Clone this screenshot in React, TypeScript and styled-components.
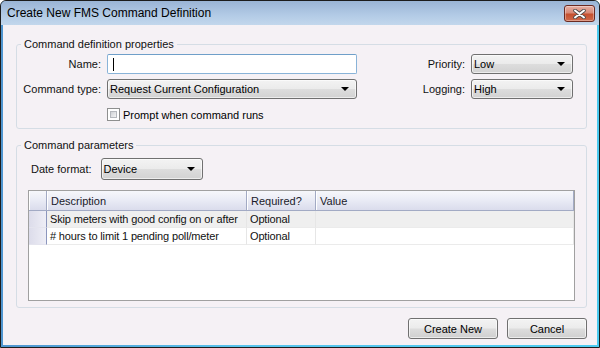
import styled, { createGlobalStyle } from 'styled-components';

const GlobalStyle = createGlobalStyle`
  html, body {
    margin: 0;
    padding: 0;
    background: #ffffff;
  }
  body {
    font-family: "Liberation Sans", Arial, sans-serif;
    font-size: 11px;
    color: #000;
  }
`;

const params = [
  { id: 1, description: 'Skip meters with good config on or after', required: 'Optional', value: '' },
  { id: 2, description: '# hours to limit 1 pending poll/meter', required: 'Optional', value: '' },
];

const Window = styled.div`
  width: 600px;
  height: 348px;
  box-sizing: border-box;
  display: flex;
  flex-direction: column;
  border: 1px solid #1c1c1c;
  border-radius: 6px 6px 0 0;
  overflow: hidden;
  background: linear-gradient(to right, #4f95cf, #58c4ec 40%, #4ccbf0);
`;

const TitleBar = styled.div`
  height: 24px;
  flex-shrink: 0;
  display: flex;
  align-items: flex-start;
  justify-content: space-between;
  padding: 0 4px 0 6px;
  background: linear-gradient(#9ab4d5, #b3cbe6 60%, #c2d7ec);
`;

const Title = styled.span`
  font-size: 12px;
  line-height: 24px;
  color: #000;
`;

const CloseButton = styled.button`
  width: 31px;
  height: 17px;
  margin-top: 4px;
  padding: 0;
  display: flex;
  align-items: center;
  justify-content: center;
  border: 1px solid #6b2a22;
  border-radius: 3px;
  background: linear-gradient(#e6b0a5, #d88a77 45%, #c5502f 55%, #cf6a4c);
  box-shadow: inset 0 0 0 1px rgba(255, 255, 255, 0.35);
`;

const Client = styled.div`
  flex: 1;
  margin: 0 2px 2px;
  padding: 12px 10px 0 13px;
  display: flex;
  flex-direction: column;
  background: #f5f1f5;
`;

const GroupBox = styled.fieldset<{ $top: number; $pad: string }>`
  margin: ${(p) => p.$top}px 0 0;
  padding: ${(p) => p.$pad};
  min-width: 0;
  border: 1px solid #d5dde5;
  border-radius: 3px;
`;

const GroupTitle = styled.legend`
  margin-left: 4px;
  padding: 0 3px;
  font-size: 11px;
  line-height: 14px;
  color: #101010;
`;

const PropGrid = styled.div`
  display: grid;
  grid-template-columns: 84px 250px 1fr auto 102px;
  grid-template-rows: 20px 20px auto;
  column-gap: 6px;
  row-gap: 5px;
  align-items: center;
`;

const ParamBody = styled.div`
  padding-left: 11px;
`;

const Spacer = styled.span``;

const FieldLabel = styled.label`
  text-align: right;
  white-space: nowrap;
  color: #111;
`;

const TextBox = styled.div`
  height: 20px;
  box-sizing: border-box;
  display: flex;
  align-items: center;
  padding-left: 5px;
  background: #fff;
  border: 1px solid #89b3d8;
  border-top-color: #6f9fc9;
  border-radius: 2px;
`;

const Caret = styled.span`
  width: 1px;
  height: 13px;
  background: #000;
`;

const Select = styled.div<{ $width?: number; $height: number }>`
  width: ${(p) => (p.$width ? `${p.$width}px` : 'auto')};
  height: ${(p) => p.$height}px;
  box-sizing: border-box;
  display: flex;
  align-items: center;
  justify-content: space-between;
  padding: 0 7px 0 2px;
  border: 1px solid #707070;
  border-radius: 3px;
  background: linear-gradient(#f3f3f3, #ebebeb 49%, #dddddd 51%, #d2d2d2);
  box-shadow: inset 0 0 0 1px rgba(255, 255, 255, 0.6);
  color: #000;
  white-space: nowrap;
`;

const Arrow = styled.span`
  width: 0;
  height: 0;
  border-left: 4px solid transparent;
  border-right: 4px solid transparent;
  border-top: 4px solid #000;
`;

const CheckRow = styled.div`
  display: flex;
  align-items: center;
  gap: 3px;
  padding-top: 4px;
`;

const CheckBox = styled.span`
  width: 13px;
  height: 13px;
  box-sizing: border-box;
  padding: 2px;
  border: 1px solid #8e8f8f;
  background: #fff;
  display: flex;
`;

const CheckInner = styled.span`
  flex: 1;
  border: 1px solid #b5b8bd;
  background: linear-gradient(135deg, #cfd1d5, #f4f4f5);
`;

const DateRow = styled.div`
  display: flex;
  align-items: center;
  gap: 9px;
  padding-left: 3px;
`;

const DataGrid = styled.div`
  margin-top: 10px;
  height: 111px;
  box-sizing: border-box;
  display: grid;
  grid-template-columns: 18px 200px 69px 1fr;
  grid-template-rows: 20px;
  grid-auto-rows: 17px;
  align-content: start;
  border: 1px solid #a0a0a0;
  background: #fff;
`;

const HeadCell = styled.div`
  display: flex;
  align-items: center;
  padding-left: 4px;
  white-space: nowrap;
  background: linear-gradient(#f6f7fb, #e9ebf5 50%, #dadcec);
  border-right: 1px solid #a2aac4;
  border-bottom: 1px solid #a2aac4;
  box-shadow: inset 1px 0 #ffffff;
  color: #1a1a2a;
`;

const RowHead = styled.div`
  background: linear-gradient(to right, #dcdcea, #eeeef6);
  border-right: 1px solid #8c96bd;
  border-bottom: 1px solid #e4e4ee;
`;

const Cell = styled.div<{ $alt: boolean }>`
  display: flex;
  align-items: center;
  padding-left: 3px;
  white-space: nowrap;
  overflow: hidden;
  letter-spacing: -0.15px;
  background: ${(p) => (p.$alt ? '#efefef' : '#ffffff')};
  border-right: 1px solid #e6e6e6;
  border-bottom: 1px solid #ebebeb;
  color: #111;
`;

const Footer = styled.div`
  display: flex;
  justify-content: flex-end;
  gap: 9px;
  margin-top: 10px;
`;

const Button = styled.button<{ $width: number }>`
  width: ${(p) => p.$width}px;
  height: 21px;
  padding: 0;
  border: 1px solid #707070;
  border-radius: 3px;
  background: linear-gradient(#f3f3f3, #ebebeb 49%, #dddddd 51%, #cfcfcf);
  box-shadow: inset 0 0 0 1px rgba(255, 255, 255, 0.6);
  font-family: inherit;
  font-size: 11px;
  color: #000;
`;

const CloseIcon = () => (
  <svg width="13" height="10" viewBox="0 0 13 10">
    <path d="M2 1.5 L11 8.5 M11 1.5 L2 8.5" stroke="#4a4a4a" strokeWidth="3.6" strokeLinecap="round" />
    <path d="M2 1.5 L11 8.5 M11 1.5 L2 8.5" stroke="#ffffff" strokeWidth="2" strokeLinecap="round" />
  </svg>
);

const App = () => {
  return (
    <>
      <GlobalStyle />
      <Window>
        <TitleBar>
          <Title>Create New FMS Command Definition</Title>
          <CloseButton aria-label="Close">
            <CloseIcon />
          </CloseButton>
        </TitleBar>
        <Client>
          <GroupBox $top={0} $pad="3px 13px 7px 0">
            <GroupTitle>Command definition properties</GroupTitle>
            <PropGrid>
              <FieldLabel>Name:</FieldLabel>
              <TextBox>
                <Caret />
              </TextBox>
              <Spacer />
              <FieldLabel>Priority:</FieldLabel>
              <Select $height={20}>
                Low
                <Arrow />
              </Select>

              <FieldLabel>Command type:</FieldLabel>
              <Select $height={20}>
                Request Current Configuration
                <Arrow />
              </Select>
              <Spacer />
              <FieldLabel>Logging:</FieldLabel>
              <Select $height={20}>
                High
                <Arrow />
              </Select>

              <Spacer />
              <CheckRow>
                <CheckBox>
                  <CheckInner />
                </CheckBox>
                Prompt when command runs
              </CheckRow>
            </PropGrid>
          </GroupBox>

          <GroupBox $top={9} $pad="6px 11px 6px 0">
            <GroupTitle>Command parameters</GroupTitle>
            <ParamBody>
              <DateRow>
                <FieldLabel>Date format:</FieldLabel>
                <Select $width={102} $height={22}>
                  Device
                  <Arrow />
                </Select>
              </DateRow>
              <DataGrid>
                <HeadCell />
                <HeadCell>Description</HeadCell>
                <HeadCell>Required?</HeadCell>
                <HeadCell>Value</HeadCell>
                {params.map((row, i) => (
                  <>
                    <RowHead key={`h${row.id}`} />
                    <Cell key={`d${row.id}`} $alt={i % 2 === 0}>{row.description}</Cell>
                    <Cell key={`r${row.id}`} $alt={i % 2 === 0}>{row.required}</Cell>
                    <Cell key={`v${row.id}`} $alt={i % 2 === 0}>{row.value}</Cell>
                  </>
                ))}
              </DataGrid>
            </ParamBody>
          </GroupBox>

          <Footer>
            <Button $width={90}>Create New</Button>
            <Button $width={80}>Cancel</Button>
          </Footer>
        </Client>
      </Window>
    </>
  );
};

export default App;
